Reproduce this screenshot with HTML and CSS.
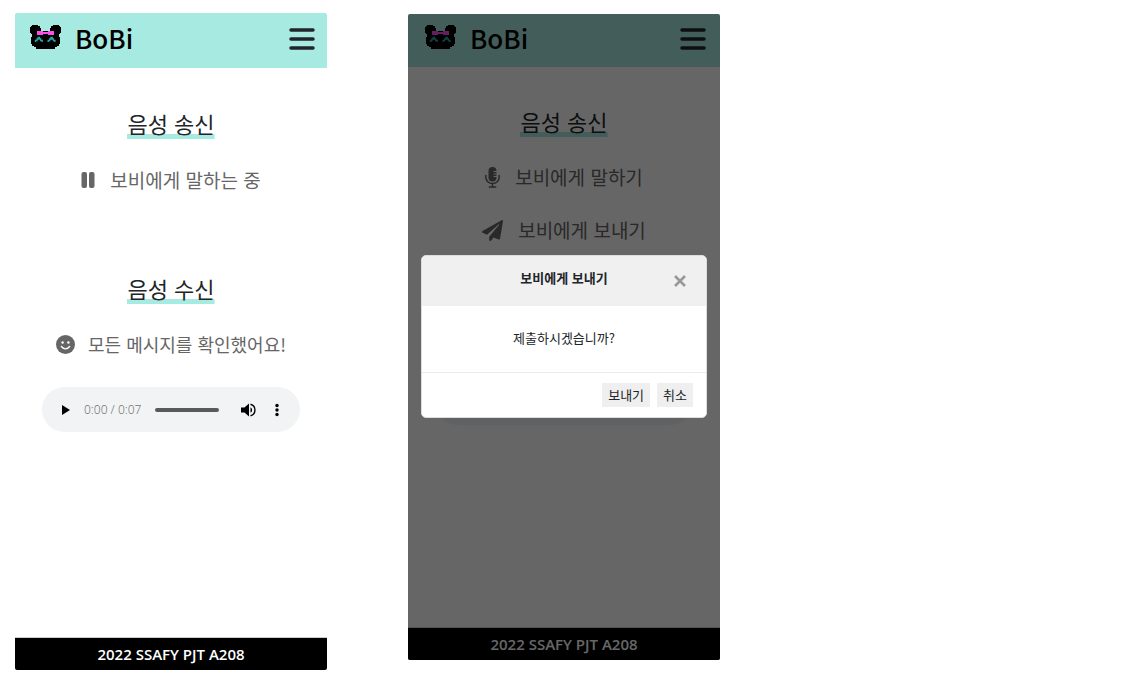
FILE: index.html
```html
<!DOCTYPE html>
<html lang="ko">
<head>
<meta charset="utf-8">
<title>BoBi</title>
<link rel="stylesheet" href="styles.css">
</head>
<body>
<svg class="defs" aria-hidden="true">
  <symbol id="panda" viewBox="0 0 31 24">
    <path fill="#000" d="M2 0h6v1h2v2h1v3h9V3h1V1h2V0h6v1h1v1h1v6h-1v1h-1v3h1v7h-1v2h-2v1h-2v2H6v-2H4v-1H2v-2H1v-7h1V9H1V8H0V2h1V1h1z"/>
    <path fill="#ff4be8" d="M7 6h6v1h5V6h6v4h-6V9h-5v1H7z"/>
    <path fill="none" stroke="#27a9a5" stroke-width="1.3" d="M5.500 17v-1.500h1.500v-1.500h1.200v-1.500h1.300v1.500h1.200v1.500h1.500V17M18.200 17v-1.500h1.500v-1.500h1.200v-1.500h1.300v1.500h1.200v1.500h1.500V17"/>
  </symbol>
  <symbol id="bars" viewBox="0 0 26 22">
    <path fill="none" stroke="#212529" stroke-width="3.500" stroke-linecap="round" d="M2 2h22M2 11h22M2 20h22"/>
  </symbol>
</svg>

<div class="board">
  <section class="phone">
    <header class="topbar">
      <a class="brand" href="#"><svg class="logo"><use href="#panda"/></svg>BoBi</a>
      <button class="menu" type="button" aria-label="메뉴"><svg><use href="#bars"/></svg></button>
    </header>
    <main class="content">
      <h1 class="title">음성 송신</h1>
      <button class="action" type="button">
        <svg class="icon-pause" viewBox="0 0 14 18"><rect x="0.500" y="1" width="5.500" height="16" rx="2" fill="currentColor"/><rect x="8" y="1" width="5.500" height="16" rx="2" fill="currentColor"/></svg>
        보비에게 말하는 중
      </button>
      <h1 class="title title-receive">음성 수신</h1>
      <p class="action message">
        <svg class="icon-smile" viewBox="0 0 19 19"><circle cx="9.500" cy="9.500" r="9.500" fill="currentColor"/><circle cx="6.600" cy="7.500" r="1.200" fill="#fff"/><circle cx="12.400" cy="7.500" r="1.200" fill="#fff"/><path d="M5.300 11.500q4.200 4.600 8.400 0" fill="none" stroke="#fff" stroke-width="1.300" stroke-linecap="round"/></svg>
        모든 메시지를 확인했어요!
      </p>
      <div class="player">
        <button class="play" type="button" aria-label="재생"><svg viewBox="0 0 10 12"><path d="M1 1v10l8-5z"/></svg></button>
        <span class="time">0:00 / 0:07</span>
        <input class="seek" type="range" min="0" max="7" value="0" aria-label="재생 위치">
        <button class="volume" type="button" aria-label="음량"><svg viewBox="0 0 15 14"><path d="M0 4.500v5h3.500L8 13.500V.5L3.500 4.500z"/><path d="M9.500 4.200v5.600a3.200 3.200 0 0 0 0-5.600z"/><path d="M9.500 1.200a6 6 0 0 1 0 11.600" fill="none" stroke="#000" stroke-width="1.400"/></svg></button>
        <button class="more" type="button" aria-label="더보기"><svg viewBox="0 0 4 14"><circle cx="2" cy="2.500" r="1.700"/><circle cx="2" cy="7" r="1.700"/><circle cx="2" cy="11.500" r="1.700"/></svg></button>
      </div>
    </main>
    <footer class="foot">2022 SSAFY PJT A208</footer>
  </section>

  <section class="phone phone-dialog">
    <header class="topbar">
      <a class="brand" href="#"><svg class="logo"><use href="#panda"/></svg>BoBi</a>
      <button class="menu" type="button" aria-label="메뉴"><svg><use href="#bars"/></svg></button>
    </header>
    <main class="content">
      <h1 class="title">음성 송신</h1>
      <button class="action" type="button">
        <svg class="icon-mic" viewBox="0 0 15 21"><path fill="currentColor" d="M7.500 0A4 4 0 0 1 11.500 4H8.500v1h3v1.500h-3v1h3v1.500h-3v1h3v.5a4 4 0 0 1-8 0V4a4 4 0 0 1 4-4z"/><path fill="none" stroke="currentColor" stroke-width="1.500" stroke-linecap="round" d="M.8 8.500v1.800a6.700 6.300 0 0 0 13.400 0V8.500M7.500 16.500v3M4.300 20h6.400"/></svg>
        보비에게 말하기
      </button>
      <button class="action action-send" type="button">
        <svg class="icon-plane" viewBox="0 0 512 512"><path fill="currentColor" d="M476 3.200L12.500 270.600c-18.100 10.400-15.800 35.600 2.200 43.200L121 358.400l287.300-253.200c5.500-4.900 13.300 2.600 8.600 8.300L176 407v80.500c0 23.600 28.500 32.900 42.500 15.800L282 426l124.600 52.200c14.200 6 30.400-2.900 33-18.200l72-432C515 7.800 493.300-6.800 476 3.200z"/></svg>
        보비에게 보내기
      </button>
      <div class="player player-covered"></div>
    </main>
    <footer class="foot">2022 SSAFY PJT A208</footer>

    <div class="overlay">
      <div class="modal" role="dialog" aria-labelledby="modal-title">
        <div class="modal-head">
          <h2 id="modal-title">보비에게 보내기</h2>
          <button class="close" type="button" aria-label="닫기"><svg viewBox="0 0 12 12"><path d="M1 1l10 10M11 1L1 11" fill="none" stroke="#999" stroke-width="2.600"/></svg></button>
        </div>
        <p class="modal-body">제출하시겠습니까?</p>
        <div class="modal-foot">
          <button type="button">보내기</button>
          <button type="button">취소</button>
        </div>
      </div>
    </div>
  </section>
</div>
</body>
</html>
```
FILE: styles.css
```css
* { box-sizing: border-box; }

body {
  margin: 0;
  background: #fff;
  color: #212529;
  font-family: "Noto Sans CJK KR", sans-serif;
}

button {
  border: 0;
  padding: 0;
  background: none;
  color: inherit;
  font: inherit;
  cursor: pointer;
}

svg { display: block; flex: none; }

.defs { display: none; }

.board {
  display: flex;
  align-items: flex-start;
  gap: 81px;
  padding: 13px 15px 0;
}

.phone {
  position: relative;
  display: flex;
  flex-direction: column;
  flex: 0 1 312px;
  min-height: calc(100vh - 22px);
  border-radius: 2px;
  overflow: hidden;
  background: #fff;
}

.phone-dialog {
  min-height: calc(100vh - 33px);
  margin-top: 1px;
}

.topbar {
  display: flex;
  align-items: flex-start;
  justify-content: space-between;
  height: 55px;
  padding: 12px 12px 0 15px;
  background: #a7eae1;
}

.phone-dialog .topbar {
  height: 53px;
  padding: 11px 14px 0 17px;
}

.brand {
  display: flex;
  gap: 14px;
  color: #000;
  font-size: 26px;
  font-weight: 500;
  line-height: 26px;
  text-decoration: none;
}

.logo { width: 31px; height: 24px; }

.menu { padding-top: 3px; }
.menu svg { width: 26px; height: 22px; }

.content {
  display: flex;
  flex: 1;
  flex-direction: column;
  align-items: center;
  padding-top: 41px;
}

.phone-dialog .content { padding-top: 40px; }

.title {
  margin: 0 0 27px;
  padding-bottom: 2px;
  background: linear-gradient(#a7eae1, #a7eae1) bottom / 100% 5px no-repeat;
  font-size: 22px;
  font-weight: 400;
  line-height: 28px;
}

.title-receive { margin-top: 80px; }
.phone-dialog .title { margin-bottom: 26px; }

.action {
  display: flex;
  align-items: center;
  gap: 15px;
  margin: 0;
  color: #666;
  font-size: 19px;
  line-height: 28px;
  white-space: nowrap;
}

.action-send { margin-top: 25px; }

.message {
  gap: 13px;
  font-size: 18px;
  line-height: 26px;
}

.icon-pause { width: 14px; height: 18px; }
.icon-smile { width: 19px; height: 19px; }
.icon-mic { width: 15px; height: 21px; }
.icon-plane { width: 21px; height: 21px; }

.player {
  display: flex;
  align-items: center;
  width: calc(100% - 54px);
  height: 45px;
  margin-top: 30px;
  padding: 0 21px 0 19px;
  border-radius: 23px;
  background: #f1f3f4;
}

.player-covered { margin-top: 136px; }

.play svg { width: 10px; height: 12px; }

.time {
  margin: 0 14px 0 13px;
  color: #757575;
  font-family: "Noto Sans", sans-serif;
  font-size: 12px;
  font-weight: 300;
  white-space: nowrap;
}

.seek {
  flex: 1;
  min-width: 0;
  height: 4px;
  margin: 0 22px 0 0;
  border-radius: 2px;
  background: #5a5a5d;
  appearance: none;
}

.seek::-webkit-slider-thumb {
  width: 1px;
  height: 4px;
  background: transparent;
  appearance: none;
}

.volume { margin-right: 19px; }
.volume svg { width: 15px; height: 14px; }
.more svg { width: 4px; height: 14px; }

.foot {
  border-top: 1px solid #ccc;
  background: #000;
  color: #fff;
  font-family: "Open Sans", sans-serif;
  font-size: 15px;
  font-weight: 600;
  line-height: 32px;
  text-align: center;
}

.overlay {
  position: absolute;
  inset: 0;
  display: flex;
  align-items: center;
  justify-content: center;
  padding: 0 13px 1px;
  background: rgba(0, 0, 0, 0.6);
}

.modal {
  flex: 1;
  border: 1px solid #ddd;
  border-radius: 5px;
  overflow: hidden;
  background: #fff;
  font-size: 13px;
}

.modal-head {
  display: grid;
  grid-template-columns: 1fr auto 1fr;
  align-items: center;
  height: 50px;
  padding: 0 20px;
  background: #f0f0f0;
}

.modal-head h2 {
  grid-column: 2;
  margin: 0 0 6px;
  font-size: 13px;
  font-weight: 700;
  line-height: 20px;
}

.close { justify-self: end; }
.close svg { width: 12px; height: 12px; }

.modal-body {
  margin: 0;
  padding: 22px 0 24px;
  line-height: 20px;
  text-align: center;
}

.modal-foot {
  display: flex;
  justify-content: flex-end;
  gap: 7px;
  padding: 10px 13px;
  border-top: 1px solid #e9ecef;
}

.modal-foot button {
  padding: 0 6px;
  background: #efefef;
  color: #212529;
  line-height: 24px;
}
```
